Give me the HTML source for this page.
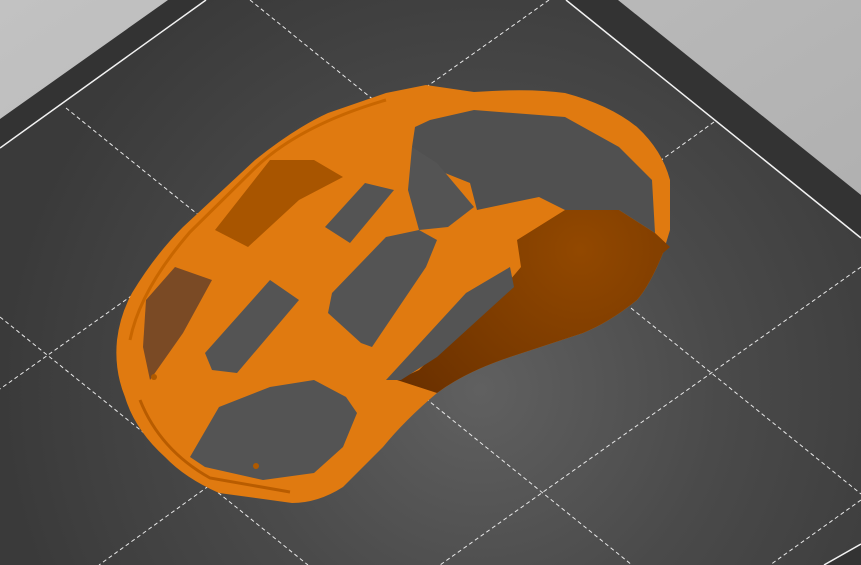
<!DOCTYPE html>
<html><head><meta charset="utf-8"><style>
html,body{margin:0;padding:0;width:861px;height:565px;overflow:hidden;background:#b5b5b5}
svg{display:block}
</style></head><body>
<svg width="861" height="565" viewBox="0 0 861 565" xmlns="http://www.w3.org/2000/svg">
<defs>
<radialGradient id="bed" cx="480" cy="390" r="480" gradientUnits="userSpaceOnUse">
<stop offset="0" stop-color="#606060"/><stop offset="0.5" stop-color="#4a4a4a"/><stop offset="1" stop-color="#3a3a3a"/>
</radialGradient>
<linearGradient id="outer" x1="0" y1="0" x2="1" y2="1">
<stop offset="0" stop-color="#c2c2c2"/><stop offset="1" stop-color="#a8a8a8"/>
</linearGradient>
<radialGradient id="lobe" cx="580" cy="250" r="220" gradientUnits="userSpaceOnUse">
<stop offset="0" stop-color="#924800"/><stop offset="0.6" stop-color="#7a3a00"/><stop offset="1" stop-color="#6a3000"/>
</radialGradient>
</defs>
<rect width="861" height="565" fill="url(#outer)"/>
<polygon points="0,119 168,0 618,0 861,195 861,565 0,565" fill="#333"/>
<polygon points="0,148 206,0 566,0 861,238 861,544 824,565 0,565" fill="url(#bed)"/>
<polyline points="0,148 206,0" stroke="#f2f2f2" stroke-width="1.5" fill="none"/>
<polyline points="566,0 861,238" stroke="#f2f2f2" stroke-width="1.5" fill="none"/>
<polyline points="861,544 824,565" stroke="#f2f2f2" stroke-width="1.5" fill="none"/>
<g stroke="#e8e8e8" stroke-width="1" stroke-dasharray="4,3" fill="none">
<line x1="250" y1="0" x2="861" y2="494"/>
<line x1="66" y1="108" x2="632" y2="565"/>
<line x1="0" y1="317" x2="308" y2="565"/>
<line x1="549" y1="0" x2="0" y2="389"/>
<line x1="714" y1="122" x2="99" y2="565"/>
<line x1="861" y1="267" x2="440" y2="565"/>
<line x1="861" y1="500" x2="770" y2="565"/>
</g>
<!-- mouse outline -->
<path d="M426,85 L474,92 Q530,88 565,93 Q610,105 637,127 Q662,150 670,180 L670,230 L663,253 Q650,285 637,300 Q610,322 583,333 L510,357 Q465,372 437,393 Q405,420 383,447 L343,487 Q318,503 292,503 L219,493 Q185,478 165,457 Q135,430 125,397 Q114,370 117,340 Q120,315 132,293 Q155,255 183,227 L255,160 Q295,128 328,113 L386,93 Z" fill="#e07a10"/>
<!-- lobe -->
<path d="M517,240 L565,210 L619,210 L655,233 L670,247 L663,253 Q650,285 637,300 Q610,322 583,333 L510,357 Q465,372 437,393 L397,380 L419,370 L510,280 L521,267 Z" fill="url(#lobe)"/>
<!-- ring hole -->
<polygon points="430,120 474,110 565,117 619,147 652,180 655,233 619,210 565,210 539,197 510,203 477,210 470,183 445,173 412,147 415,127" fill="#505050"/>
<!-- shaded walls -->
<polygon points="215,230 270,160 314,160 343,177 299,200 248,247" fill="#a85500"/>
<polygon points="146,300 175,267 212,280 183,333 150,380 143,347" fill="#7a4a25"/>
<g fill="#545454">
<polygon points="325,227 365,183 394,190 350,243"/>
<polygon points="332,293 386,237 419,230 437,240 426,267 372,347 361,343 328,313"/>
<polygon points="205,353 270,280 299,300 237,373 212,370"/>
<polygon points="190,457 219,407 270,387 314,380 346,397 357,413 343,447 314,473 263,480 205,467"/>
<polygon points="386,380 466,293 510,267 514,287 437,357 401,380"/>
<polygon points="412,147 437,163 474,207 448,227 419,230 408,190"/>
</g>
<!-- rim highlights/shadows -->
<path d="M386,100 Q300,125 255,168 L190,232 Q140,290 130,340" stroke="#c86600" stroke-width="3" fill="none"/>
<path d="M140,400 Q160,450 210,478 L290,492" stroke="#b85c00" stroke-width="3" fill="none"/>
<circle cx="154" cy="377" r="3" fill="#b05a00"/>
<circle cx="256" cy="466" r="3" fill="#b05a00"/>
</svg>
</body></html>
